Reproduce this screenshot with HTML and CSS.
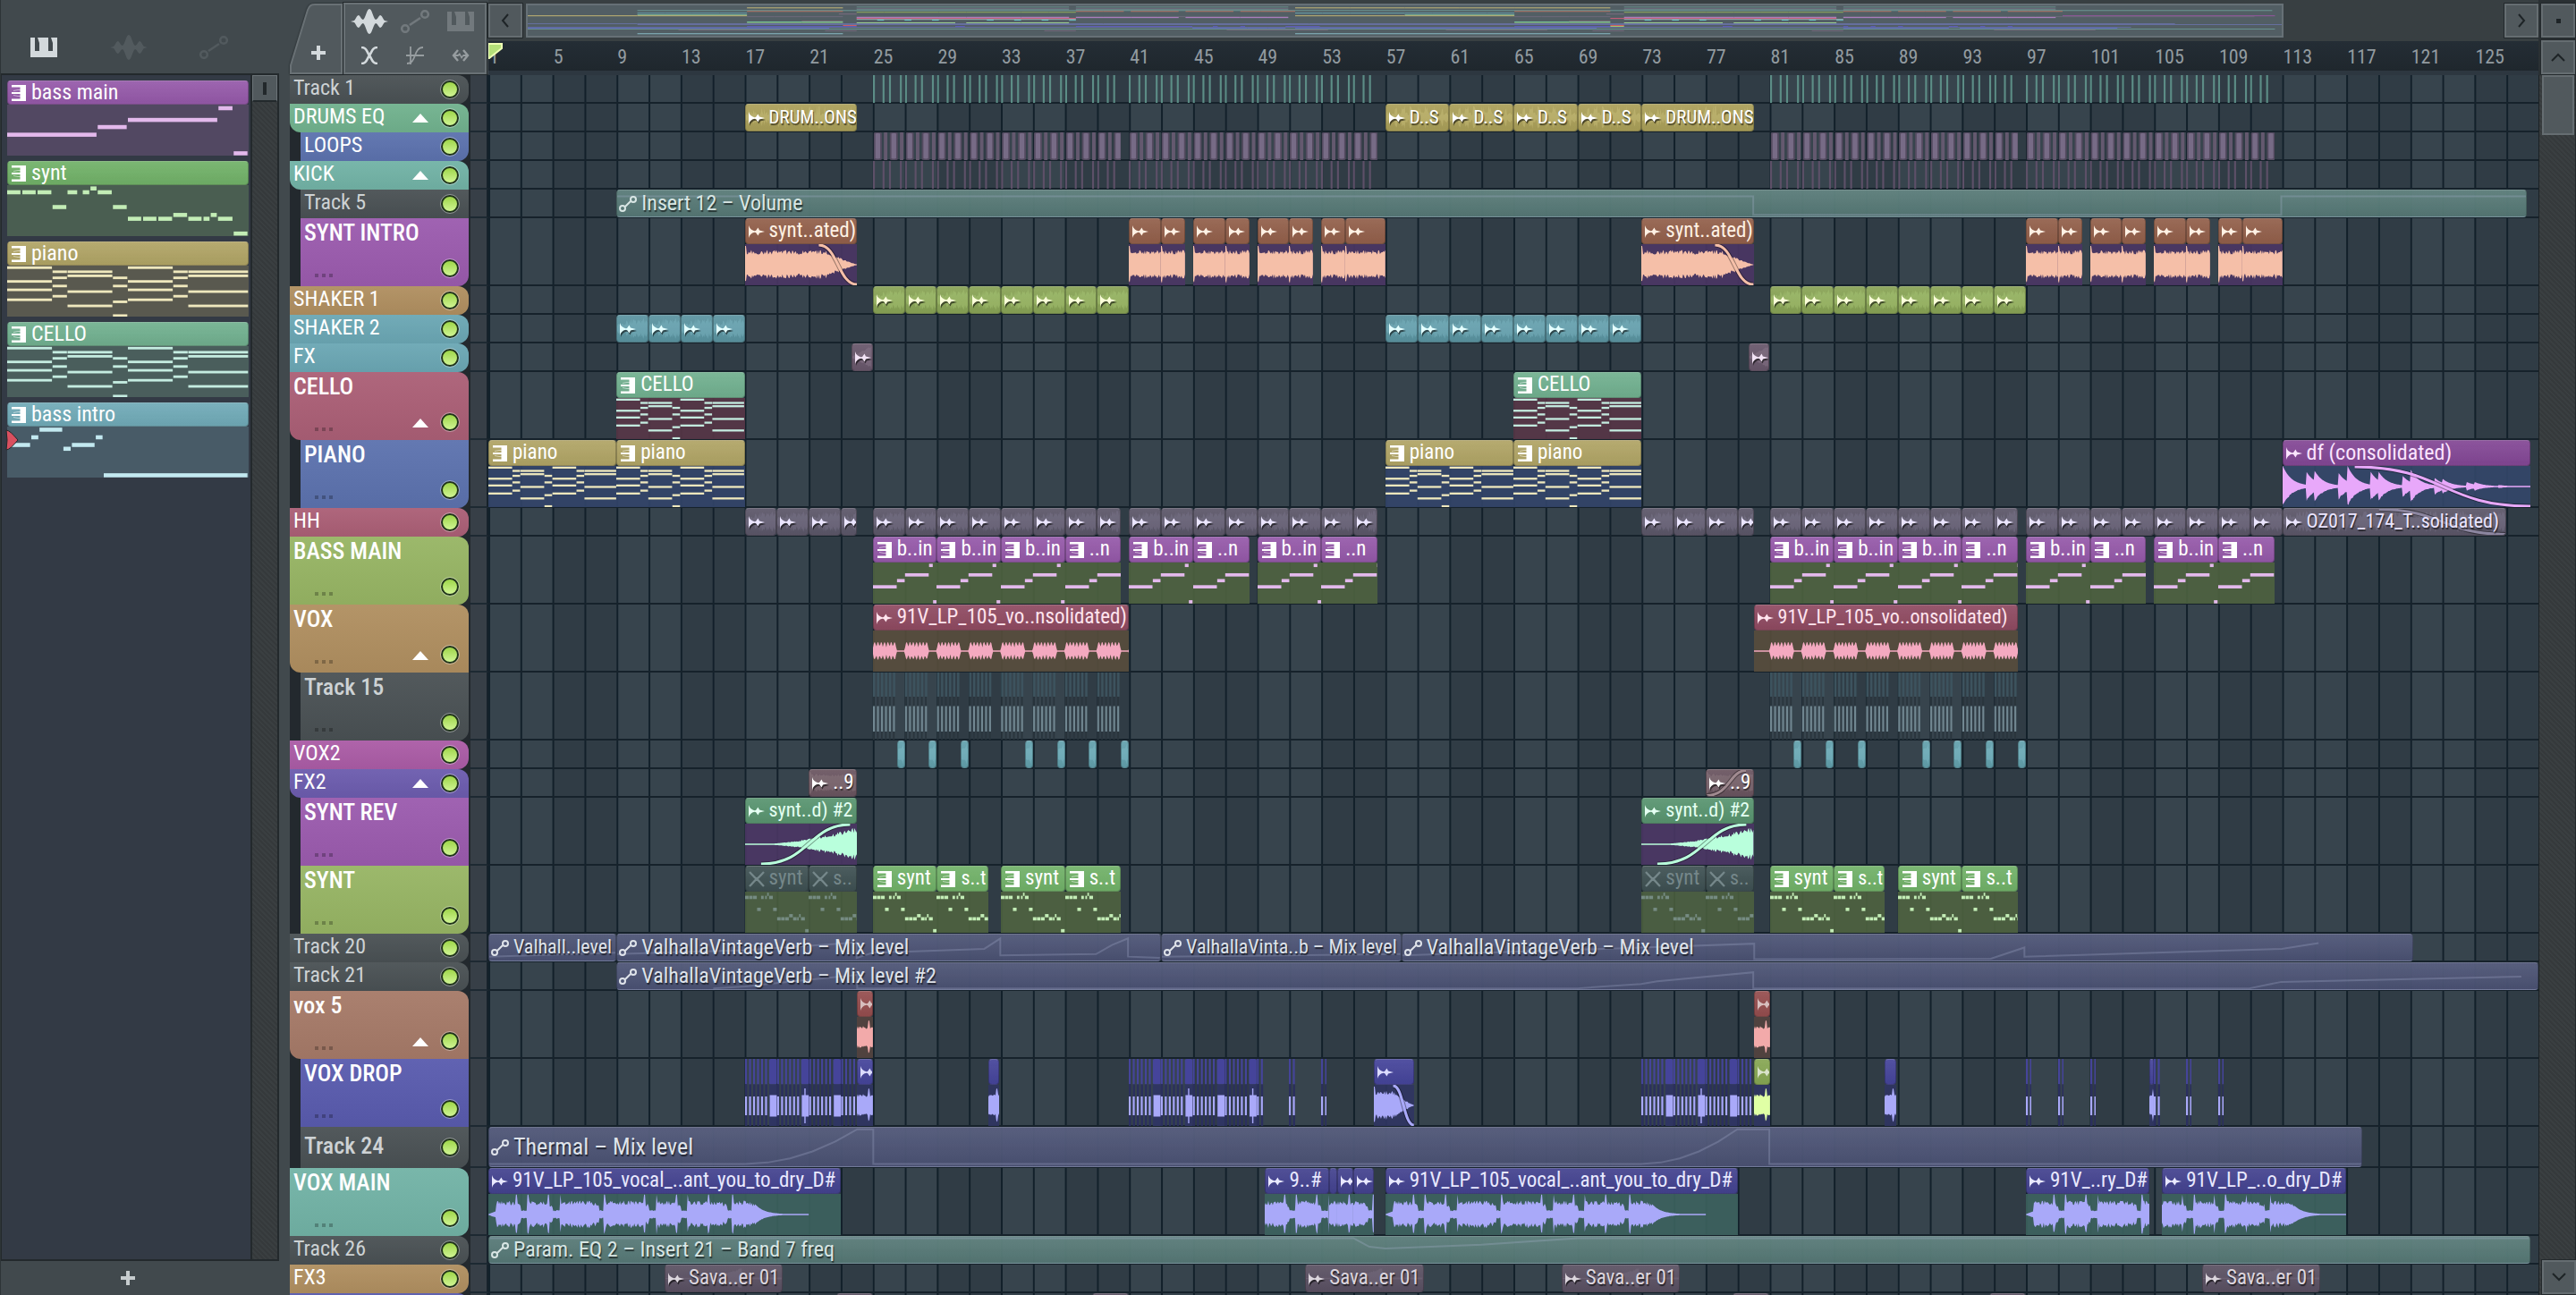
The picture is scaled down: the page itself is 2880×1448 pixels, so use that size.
FILE: index.html
```html
<!DOCTYPE html>
<html lang="en">
<head>
<meta charset="utf-8">
<title>Playlist</title>
<link rel="stylesheet" href="styles.css">
</head>
<body>
<svg class="sprite" aria-hidden="true">
  <symbol id="i-piano" viewBox="0 0 30 22"><path d="M0 0H5V15H10V6L8 0H20V15H25V6L23 0H30V22H0Z"/></symbol>
  <symbol id="i-wave" viewBox="0 0 42 28"><path d="M0 14L4 13C6 11 7 7 9 7C11 8 12 12 14 12C17 10 18 0 21 0C24 0 25 10 28 12C30 12 31 8 33 7C35 7 36 11 38 13L42 14L38 15C36 17 35 21 33 21C31 20 30 16 28 16C25 18 24 28 21 28C18 28 17 18 14 16C12 16 11 20 9 21C7 21 6 17 4 15Z"/></symbol>
  <symbol id="i-link" viewBox="0 0 32 26"><g fill="none" stroke="currentColor" stroke-width="2.6"><circle cx="5" cy="21" r="3.8"/><circle cx="27" cy="5" r="3.8"/><path d="M10 17L22 9"/></g></symbol>
  <symbol id="i-cross" viewBox="0 0 20 20"><path d="M1 1C7 1 7 6 10 10S13 19 19 19M19 1C13 1 13 6 10 10S7 19 1 19" fill="none" stroke="currentColor" stroke-width="2.6"/></symbol>
  <symbol id="i-curve" viewBox="0 0 20 20"><path d="M5 0V20M0 10H20M1 19C12 19 8 1 19 1" fill="none" stroke="currentColor" stroke-width="1.8"/></symbol>
  <symbol id="i-slip" viewBox="0 0 20 14"><path d="M7 1L2 7L7 13M13 1L18 7L13 13" fill="none" stroke="currentColor" stroke-width="2.4"/><path d="M2 6H7L9 4L11 8L13 6H18V8H13L11 11L9 7L7 8H2Z"/></symbol>
  <symbol id="i-plus" viewBox="0 0 16 16"><path d="M6 0H10V6H16V10H10V16H6V10H0V6H6Z"/></symbol>
  <symbol id="i-left" viewBox="0 0 10 16"><path d="M8 1L2 8L8 15" fill="none" stroke="currentColor" stroke-width="2"/></symbol>
  <symbol id="i-right" viewBox="0 0 10 16"><path d="M2 1L8 8L2 15" fill="none" stroke="currentColor" stroke-width="2"/></symbol>
  <symbol id="i-up" viewBox="0 0 16 10"><path d="M1 9L8 2L15 9" fill="none" stroke="currentColor" stroke-width="2"/></symbol>
  <symbol id="i-down" viewBox="0 0 16 10"><path d="M1 1L8 8L15 1" fill="none" stroke="currentColor" stroke-width="2"/></symbol>
  <symbol id="c-audio" viewBox="0 0 18 14"><path d="M0 0C1 3 3 5.500 6.500 6.200L8 6L10.500 2.500L12 5.500L18 7L12 8.500L10.500 11.500L8 8L6.500 7.800C3 8.500 1 11 0 14Z"/></symbol>
  <symbol id="c-pattern" viewBox="0 0 16 18"><path d="M0 0H16V18H0V15.500H9.500V12.800L2 12V11.400L9.500 12.200V10H0V8H9.500V5.800L2 6.600V6L9.500 5.200V2.500H0Z"/></symbol>
  <symbol id="c-auto" viewBox="0 0 20 18"><g fill="none" stroke="currentColor" stroke-width="2"><circle cx="4" cy="14" r="3"/><circle cx="16" cy="4" r="3"/><path d="M7 12L13 6"/></g></symbol>
  <symbol id="c-muted" viewBox="0 0 18 18"><path d="M1 1C5 5 6 7 9 9S13 13 17 17M17 1C13 5 12 7 9 9S5 13 1 17" fill="none" stroke="currentColor" stroke-width="2.4"/></symbol>
</svg>

<div class="app">
  <aside class="picker">
    <nav class="picker-tabs" aria-label="Picker filters">
      <button class="icon-btn is-on" aria-label="Patterns"><svg class="ic-piano"><use href="#i-piano"/></svg></button>
      <button class="icon-btn is-dim" aria-label="Audio clips"><svg class="ic-wave"><use href="#i-wave"/></svg></button>
      <button class="icon-btn is-dim" aria-label="Automation clips"><svg class="ic-link"><use href="#i-link"/></svg></button>
    </nav>
    <div class="picker-body">
      <div class="picker-list" id="picker"></div>
      <div class="picker-scroll"><button class="picker-thumb" aria-label="Scroll patterns"></button></div>
    </div>
    <button class="picker-add" aria-label="Add pattern"><svg class="ic-plus"><use href="#i-plus"/></svg></button>
  </aside>

  <main class="playlist">
    <header class="top">
      <div class="tools">
        <button class="tab-add" aria-label="Add track">
          <svg class="tab-shape" viewBox="0 0 60 80" preserveAspectRatio="none" aria-hidden="true"><path d="M1 79V70L20 8C22 3 24 2 28 2H58V79Z"/></svg>
          <svg class="ic-plus"><use href="#i-plus"/></svg>
        </button>
        <div class="tool-grid">
          <button class="icon-btn is-on" aria-label="Audio clips"><svg class="ic-wave"><use href="#i-wave"/></svg></button>
          <button class="icon-btn is-mid" aria-label="Automation clips"><svg class="ic-link"><use href="#i-link"/></svg></button>
          <button class="icon-btn is-mid" aria-label="Pattern clips"><svg class="ic-piano"><use href="#i-piano"/></svg></button>
          <button class="icon-btn is-on" aria-label="Auto crossfade"><svg class="ic-small"><use href="#i-cross"/></svg></button>
          <button class="icon-btn is-half" aria-label="Fade curve"><svg class="ic-small"><use href="#i-curve"/></svg></button>
          <button class="icon-btn is-half" aria-label="Slip edit"><svg class="ic-slip"><use href="#i-slip"/></svg></button>
        </div>
      </div>
      <div class="time">
        <div class="overview">
          <button class="nav-btn" aria-label="Scroll left"><svg class="ic-h"><use href="#i-left"/></svg></button>
          <div class="overview-track"><svg class="minimap" id="minimap" viewBox="0 0 128 38" preserveAspectRatio="none" aria-hidden="true"></svg></div>
          <button class="nav-btn" aria-label="Scroll right"><svg class="ic-h"><use href="#i-right"/></svg></button>
        </div>
        <div class="ruler" id="ruler"></div>
      </div>
      <div class="corner">
        <button class="nav-btn" aria-label="Options"><span class="dot"></span></button>
        <button class="nav-btn" aria-label="Scroll up"><svg class="ic-v"><use href="#i-up"/></svg></button>
      </div>
    </header>
    <div class="stage">
      <div class="tracks" id="tracks"></div>
      <div class="vscroll">
        <button class="vscroll-thumb" aria-label="Scroll tracks"></button>
        <button class="nav-btn" aria-label="Scroll down"><svg class="ic-v"><use href="#i-down"/></svg></button>
      </div>
    </div>
  </main>
</div>
<script src="script.js"></script>
</body>
</html>
```
FILE: styles.css
```css
* { box-sizing: border-box; }

body {
  margin: 0;
  background: #41494d;
  color: #fff;
  font-family: "Roboto Condensed", Roboto, "Noto Sans", sans-serif;
  font-size: 24px;
  line-height: 28px;
}

button {
  appearance: none;
  margin: 0;
  padding: 0;
  border: 0;
  background: none;
  color: inherit;
  font: inherit;
  text-align: left;
}

svg { display: block; fill: currentColor; }
.sprite { display: none; }

.app {
  display: grid;
  grid-template-columns: 324px 1fr;
  height: 100vh;
  overflow: hidden;
}

/* icons */
.ic-piano { width: 30px; height: 22px; }
.ic-wave { width: 42px; height: 28px; }
.ic-link { width: 32px; height: 26px; }
.ic-small { width: 20px; height: 20px; }
.ic-slip { width: 20px; height: 14px; }
.ic-plus { width: 16px; height: 16px; }
.ic-h { width: 10px; height: 16px; }
.ic-v { width: 16px; height: 10px; }
.icon-btn { display: grid; place-items: center; }
.is-on { color: #d3d9dc; }
.is-dim { color: #525a5e; }
.is-mid { color: #72797d; }
.is-half { color: #979da0; }

/* picker panel */
.picker {
  display: flex;
  flex-direction: column;
  min-height: 0;
  border-left: 1px solid #2d3437;
}
.picker-tabs {
  display: grid;
  grid-template-columns: repeat(3, 95px);
  height: 82px;
  padding-top: 24px;
}
.picker-body {
  display: flex;
  flex: 1;
  min-height: 0;
  margin-right: 12px;
  border: 2px solid #23292c;
  border-left-width: 1px;
}
.picker-list {
  display: flex;
  flex: 1;
  flex-direction: column;
  gap: 6px;
  padding: 6px 2px 6px 6px;
  background: #333a45;
}
.picker-scroll {
  width: 30px;
  border-left: 2px solid #23292c;
  background: repeating-linear-gradient(45deg, #35393b 0 2px, #3a3f41 2px 4px);
}
.picker-thumb {
  display: grid;
  place-items: center;
  width: 28px;
  height: 30px;
  border: 1px solid #6b7377;
  border-bottom: 2px solid #23292c;
  background: #51595d;
}
.picker-thumb::before { content: ""; width: 4px; height: 14px; background: #22282b; }
.picker-add {
  display: grid;
  place-items: center;
  width: 284px;
  height: 38px;
  color: #c6ccce;
}
.pattern.clip {
  position: relative;
  width: 100%;
  height: 84px;
  overflow: visible;
  font-size: 24px;
}
.pattern .clip-head { width: 100%; height: 27px; }
.pattern .clip-body { width: 100%; }
.playhead {
  position: absolute;
  left: -2px;
  top: 30px;
  width: 15px;
  height: 24px;
  fill: #d9505f;
  stroke: #23292c;
}

/* top bar */
.playlist { display: flex; flex-direction: column; min-width: 0; min-height: 0; }
.top {
  display: grid;
  grid-template-columns: 222px 1fr 42px;
  height: 84px;
}
.tools {
  display: grid;
  grid-template-columns: 60px 160px;
  padding-top: 3px;
  border-bottom: 2px solid #23292c;
}
.tab-add { position: relative; display: grid; place-items: center; padding: 32px 0 0 4px; color: #d3d9dc; }
.tab-shape {
  position: absolute;
  inset: 0;
  width: 100%;
  height: 100%;
  fill: #51595d;
  stroke: #697175;
  stroke-width: 2;
  filter: drop-shadow(0 0 1px #1c2225);
}
.tab-add .ic-plus { position: relative; }
.tool-grid {
  display: grid;
  grid-template: 38px 38px / 1fr 1fr 1fr;
  padding: 0 2px;
  border: 2px solid #697175;
  outline: 1px solid #23292c;
  background: #51595d;
}
.time { display: flex; flex-direction: column; min-width: 0; }
.overview { display: flex; height: 46px; padding-top: 4px; background: #383f42; }
.nav-btn {
  display: grid;
  flex: none;
  place-items: center;
  width: 38px;
  height: 38px;
  border: 2px solid #656d71;
  outline: 1px solid #23292c;
  background: #51595d;
  color: #1e2427;
}
.overview-track { flex: 1; margin: 0 4px; }
.minimap {
  width: 89%;
  height: 38px;
  border: 2px solid #667076;
  background: #525e64;
}
.ruler {
  position: relative;
  display: grid;
  grid-template-columns: repeat(32, 1fr);
  height: 38px;
  padding-top: 4px;
  border-bottom: 5px solid #2d3740;
  background: linear-gradient(#242d35, #1f272d);
  color: #929ba0;
  font-size: 22px;
  line-height: 28px;
}
.ruler span { padding-left: 1px; white-space: nowrap; }
.marker { position: absolute; left: 0; top: 2px; width: 16px; height: 18px; fill: #b5e079; stroke: #efffb5; stroke-width: 2; }
.corner { display: grid; gap: 3px; align-content: start; padding: 4px 0 0 3px; background: #2a3033; }
.dot { width: 5px; height: 5px; background: #1e2427; }

/* tracks */
.stage { display: flex; flex: 1; min-height: 0; overflow: hidden; }
.tracks { flex: 1; min-width: 0; background: #23292e; }
.vscroll {
  display: flex;
  flex-direction: column;
  justify-content: space-between;
  width: 42px;
  padding: 0 1px 1px 3px;
  border-left: 1px solid #1c2225;
  border-right: 1px solid #23292c;
  background: repeating-linear-gradient(45deg, #35393b 0 2px, #3a3f41 2px 4px);
}
.vscroll-thumb { height: 67px; border: 2px solid #656d71; background: #51595d; }
.track { display: flex; height: 32px; }
.track--tall { height: 76px; }
.track--mid { height: 46px; }
.strip {
  width: 22px;
  border-left: 2px solid #23292e;
  border-right: 2px solid #16222b;
  border-bottom: 2px solid #1d2932;
  background: #373f47;
}
.head {
  display: grid;
  grid-template-columns: 1fr auto auto;
  align-items: center;
  column-gap: 14px;
  width: 200px;
  padding: 0 11px 0 4px;
  background: linear-gradient(#ffffff0c, #0000000c) var(--c);
}
.head--child { width: 188px; margin-left: 12px; }
.head--tr { border-top-right-radius: 12px; }
.head--br { border-bottom-right-radius: 12px; }
.head--parent { border-bottom-left-radius: 12px; }
.name { grid-column: 1; white-space: nowrap; padding-bottom: 4px; }
.track--tall .head { grid-template-rows: 32px 1fr; align-items: end; padding-bottom: 10px; }
.track--tall .name, .track--mid .name { font-size: 26px; font-weight: 500; }
.track--tall .name { grid-column: 1 / -1; align-self: center; padding-bottom: 0; }
.more { display: flex; gap: 4px; grid-column: 1; margin-left: 24px; }
.head--child .more { margin-left: 12px; }
.more i { width: 4px; height: 4px; background: #00000040; }
.fold {
  grid-column: 2;
  width: 0;
  height: 0;
  border: 9px solid transparent;
  border-top-width: 0;
  border-bottom: 10px solid #fff;
}
.track--tall .fold { margin-bottom: 4px; }
.led {
  appearance: none;
  grid-column: 3;
  width: 20px;
  height: 20px;
  margin: 0;
  border: 2px solid #20341a;
  border-radius: 50%;
  outline: 1px solid #ffffff60;
  background: linear-gradient(#9ed549, #d0f594);
}
.c-gray { --c: #4a5154; color: #cdd2d4; }
.c-green { --c: #71b28e; }
.c-blue { --c: #5c72ae; }
.c-teal { --c: #72b3a6; }
.c-purple { --c: #9b5bae; }
.c-sand { --c: #b08f60; }
.c-aqua { --c: #6ba7b4; }
.c-rose { --c: #ab5f76; }
.c-lime { --c: #97b564; }
.c-pink { --c: #ab5ca6; }
.c-violet { --c: #6c5cae; }
.c-clay { --c: #a67a68; }
.c-indigo { --c: #595bae; }

.lane {
  position: relative;
  flex: 1;
  min-width: 0;
  border-bottom: 2px solid #16222b;
  background:
    linear-gradient(90deg, #12202a 2px, transparent 2px) 0 0 / 1.5625% 100%,
    linear-gradient(90deg, #37444d 50%, #303c45 50%) 0 0 / 6.25% 100%;
}

/* clips */
.clip {
  position: absolute;
  top: 0;
  bottom: -1px;
  display: flex;
  flex-direction: column;
  overflow: hidden;
  color: var(--text, #fff);
  font-size: 23px;
}
.clip-head {
  position: relative;
  display: flex;
  flex: none;
  align-items: center;
  gap: 5px;
  height: 29px;
  padding-left: 3px;
  overflow: hidden;
  border: 1px solid #00000038;
  border-top-color: #ffffff38;
  border-radius: 4px;
  background: linear-gradient(#ffffff12, #0000000c) var(--head);
  line-height: 24px;
  white-space: nowrap;
}
.clip-head svg { position: relative; flex: none; width: 18px; height: 18px; }
.clip-head span { position: relative; padding-bottom: 1px; }
.clip-head .clip-art { position: absolute; inset: 0; width: 100%; height: 100%; }
.clip-head .shape { opacity: .3; }
.clip--dark .clip-head, .clip--auto .clip-head { text-shadow: 1px 2px 1px #00000090; }
.clip--dark .clip-head svg:not(.clip-art) { filter: drop-shadow(1px 2px 0 #00000090); }
.clip-body { flex: 1; min-height: 0; background: var(--body); }
.clip-art { width: 100%; height: 100%; fill: var(--wave); }
.clip--flat .clip-head { height: 100%; }
.clip--auto { font-size: 24px; }
.clip--auto .clip-head { height: 100%; padding-left: 2px; border-bottom-color: #b4bcdc50; }
.clip--auto .clip-head svg.clip-art { fill: none; stroke: #b4bcdc; stroke-width: 2; opacity: .25; }
.clip--auto .clip-head svg { width: 20px; }
.clip--auto .clip-head .clip-art { width: 100%; }
.clip--big { font-size: 26px; }
.clip--tight { font-size: 22px; }
.clip--faint { --text: #ffffffa0; }
.clip--stripes { overflow: visible; }
.fade { fill: none; stroke: var(--wave); stroke-width: 3; }
.fade-shadow { fill: none; stroke: #00000060; stroke-width: 5; }

.k-drum { --head: #aa9f58; --wave: #d9cf8c; font-size: 21px; }
.k-synth { --head: #925f4a; --body: #4b3664e8; --wave: #f5bfa8; --text: #fff1e4; }
.k-shaker { --head: #88a355; --wave: #b9d983; --text: #fbffda; }
.k-shaker2 { --head: #5a93a0; --wave: #8fcbd6; --text: #e4ffff; }
.k-fx { --head: #67566a; --wave: #9d879b; --text: #f2e3f5; }
.k-cello { --head: #71b08f; --body: #573646e8; --wave: #c4ece0; }
.k-piano { --head: #b0a465; --body: #33446ae8; --wave: #efe8bd; }
.k-df { --head: #834795; --body: #34466ae8; --wave: #e8a8fa; --text: #fbe4ff; font-size: 24px; }
.k-hh { --head: #5b5668; --wave: #8c86a0; --text: #ebe5ff; }
.k-bass { --head: #9559a9; --body: #4e6240e8; --wave: #e3b9ec; }
.k-vox { --head: #8f4a61; --body: #584d3ce8; --wave: #f4a9c0; --text: #ffe4ee; }
.k-vox2 { --head: #62a0ac; --wave: #8fcbd6; }
.k-fx2 { --head: #69545f; --wave: #a08a90; --text: #fff; }
.k-rev { --head: #58946f; --body: #4b3664e8; --wave: #b9ffdc; --text: #e4fff2; }
.k-synt { --head: #71b168; --body: #4e6240e8; --wave: #c3edb6; }
.k-muted { --head: #3e5052; --body: #4e6240d8; --wave: #758b82; --text: #75878a; }
.k-verb { --head: #4c5476f4; --wave: #6d76a8; --text: #dfe3ea; }
.k-vol { --head: #587b78f4; --wave: #6fa09a; --text: #d8e6e4; }
.k-red { --head: #954d4e; --body: #54433fe8; --wave: #f2aaaa; --text: #ffffffa0; }
.k-drop { --head: #45449a; --body: #2f3562e8; --wave: #a9a9f9; --text: #dcdcff; }
.k-lime { --head: #86a653; --body: #2f3562e8; --wave: #e0ffa5; --text: #ffffffb0; }
.k-main { --head: #43428f; --body: #3d625ee8; --wave: #a9a9f9; --text: #e9e9ff; }
.k-sava { --head: #5a5062; --wave: #857a90; --text: #dcd6de; }
.k-intro { --head: #70aab7; --body: #485b67; --wave: #c3e9f0; }

/* picker tiles sit on their own muted tint */
.pattern.k-bass { --body: #524862; }
.pattern.k-synt { --body: #4a5e51; }
.pattern.k-piano { --body: #59594f; }
.pattern.k-cello { --body: #4a5e5c; }
```
FILE: script.js
```js
const BARS = 128;
const PX = 18; // drawing resolution, units per bar

const tracks = [
  ["Track 1", "gray", "", "tr br"],
  ["DRUMS EQ", "green", "", "tr parent"],
  ["LOOPS", "blue", "", "child br"],
  ["KICK", "teal", "", "tr parent"],
  ["Track 5", "gray", "", "child"],
  ["SYNT INTRO", "purple", "tall", "child br"],
  ["SHAKER 1", "sand", "", "tr br"],
  ["SHAKER 2", "aqua", "", "tr br"],
  ["FX", "aqua", "", "tr br"],
  ["CELLO", "rose", "tall", "tr parent"],
  ["PIANO", "blue", "tall", "child br"],
  ["HH", "rose", "", "tr br"],
  ["BASS MAIN", "lime", "tall", "tr br"],
  ["VOX", "sand", "tall", "tr parent"],
  ["Track 15", "gray", "tall", "child br"],
  ["VOX2", "pink", "", "tr br"],
  ["FX2", "violet", "", "tr parent"],
  ["SYNT REV", "purple", "tall", "child"],
  ["SYNT", "lime", "tall", "child br"],
  ["Track 20", "gray", "", "tr br"],
  ["Track 21", "gray", "", "tr br"],
  ["vox 5", "clay", "tall", "tr parent"],
  ["VOX DROP", "indigo", "tall", "child"],
  ["Track 24", "gray", "mid", "child br"],
  ["VOX MAIN", "teal", "tall", "tr br"],
  ["Track 26", "gray", "", "tr br"],
  ["FX3", "sand", "", "tr br"],
  ["", "indigo", "", "tr"]
];

/* ---- note patterns: [start, end, row] as fractions of the pattern ---- */
const chord = (a, b, rows) => rows.map(r => [a, b, r]);
const keys = [
  ...chord(0, .188, [.04, .31, .475, .67]), ...chord(.188, .25, [.12, .24, .4, .6]),
  ...chord(.25, .438, [.12, .2, .51, .79]), ...chord(.438, .5, [.24, .4, .71, .98]),
  ...chord(.5, .688, [.04, .31, .475, .67]), ...chord(.688, .75, [.12, .24, .4, .6]),
  ...chord(.75, 1, [.12, .2, .51, .79])
];
const patterns = {
  piano: { bars: 8, size: 5, notes: keys },
  cello: { bars: 8, size: 5, notes: keys },
  bass: { bars: 4, size: 8, notes: [[0, .375, .59], [.375, .5, .44], [.5, .875, .3], [.875, .938, .07], [.938, 1, .955]] },
  synt: { bars: 4, size: 8, notes: [
    [0, .06, .14], [.063, .123, .14], [.126, .188, .14], [.188, .25, .43], [.25, .295, .14], [.313, .345, .14],
    [.345, .375, .065], [.375, .438, .14], [.438, .5, .43], [.5, .56, .66], [.563, .623, .66], [.626, .688, .66],
    [.688, .75, .585], [.75, .81, .66], [.813, .843, .66], [.843, .873, .585], [.873, .938, .66], [.938, 1, .95]] },
  intro: { bars: 4, size: 8, notes: [[0, .1, .36], [.1, .134, .21], [.134, .233, .06], [.233, .268, .435], [.268, .367, .36], [.367, .4, .21], [.4, 1, .955]] }
};

function notesSvg(name, len) {
  const p = patterns[name];
  let out = "";
  for (const [a, b, y] of p.notes) {
    out += `<rect x="${a * p.bars * 100}" y="${y * 100 - p.size / 2}" width="${(b - a) * p.bars * 100 - 2}" height="${p.size}"/>`;
  }
  return art(len * 100, out);
}

function art(width, inner) {
  return `<svg class="clip-art" viewBox="0 0 ${width} 100" preserveAspectRatio="none" aria-hidden="true">${inner}</svg>`;
}

/* ---- waveforms ---- */
let seed = 7;
const rnd = () => (seed = (seed * 16807) % 2147483647) / 2147483647;

const vocalBlocks = [[.45, 2], [2.45, 4], [4.5, 6.9], [7.25, 10], [10.5, 12], [12.45, 14.9], [15.25, 16.7]];
const vocalPeaks = [1.75, 2.47, 3.75, 4.5, 7.25, 9.75, 10.5, 11.75, 12.45, 13.75, 15.25];
const hits = [[0, 1], [1.45, .75], [2, .75], [3.45, .7], [4.05, 1], [5.5, .7], [6, .7], [7.5, .5], [8, .8], [9.5, .4], [10, .35], [11.5, .2], [12, .2], [13.5, .06]];

const envelopes = {
  sustain: (t, len, o) => {
    let v = t < .08 ? .9 : .48 + rnd() * .22;
    if (o.fade !== undefined && t > o.fade) v *= Math.pow(Math.max(0, 1 - (t - o.fade) / (len - o.fade)), 1.2);
    return v;
  },
  grow: (t, len) => .02 + Math.pow(Math.max(0, t / len - .25) / .75, 1.4) * (.65 + rnd() * .35) * .8,
  vocal: (t, len, o) => {
    const x = t + (o.off || 0);
    if (vocalPeaks.some(p => Math.abs(x - p) < .05)) return .95;
    if (x > 16.7) return Math.max(.02, .45 * Math.exp(-(x - 16.7) * 1.8));
    for (const [a, b] of vocalBlocks) if (x >= a && x <= b) return (.44 + rnd() * .22) * (b - x < .5 ? .75 + (b - x) * .5 : 1);
    return x < .45 ? x * .3 : .15 + rnd() * .05;
  },
  hits: t => {
    let v = .015;
    for (const [at, amp] of hits) if (t >= at) v = Math.max(v, amp * Math.exp(-(t - at) * 1.8));
    return v;
  },
  pulses: (t, len, o) => {
    const x = t - (o.lead || 0);
    if (x < 0) return .015;
    const m = x % 2;
    return m < 1.45 ? .15 + .28 * Math.abs(Math.sin(m / 1.45 * Math.PI * 7)) : .02;
  },
  burst: (t, len) => (t > len * .7 && t < len * .8 ? .8 : .4 + rnd() * .15),
  drums: t => .15 + rnd() * (t % .5 < .2 ? .8 : .3),
  beat: t => (t % 2 > .8 ? .3 + rnd() * .55 : .15 + rnd() * .5),
  ramp: (t, len) => .05 + .85 * (t / len) * (.8 + rnd() * .2),
  swell: (t, len) => (t < len * .66 ? .02 + .9 * Math.pow(t / len / .66, 3) * (.7 + rnd() * .3) : .06)
};

function waveSvg(kind, len, o) {
  seed = 7 + Math.round(len * 10);
  const stop = Math.min(len, o.stop || len);
  const n = Math.max(4, Math.round(stop * PX));
  const top = [], bottom = [];
  for (let i = 0; i <= n; i++) {
    const v = envelopes[kind](i / PX, len, o) * 50;
    const w = v * (.85 + rnd() * .15);
    top.push(`${i} ${(50 - v - .8).toFixed(1)}`);
    bottom.unshift(`${i} ${(50 + w + .8).toFixed(1)}`);
  }
  let inner = `<path class="shape" d="M${top.join("L")}L${bottom.join("L")}Z"/>`;
  if (o.curve) {
    const w = len * PX, x = o.curve[1] * PX, mid = (x + w) / 2;
    const d = o.curve[0] === "out"
      ? `M${x} 2C${mid} 2 ${mid} 98 ${w} 98`
      : `M${x} 98C${mid} 98 ${mid} 2 ${w - 8} 2`;
    inner += `<path class="fade-shadow" vector-effect="non-scaling-stroke" d="${d}"/><path class="fade" vector-effect="non-scaling-stroke" d="${d}"/>`;
  }
  return art(len * PX, inner);
}

function lineSvg(points, len) {
  const d = points.map(([x, y]) => `${x * 10} ${y * 100}`).join("L");
  return art(len * 10, `<path vector-effect="non-scaling-stroke" d="M${d}"/>`);
}

/* ---- clips ---- */
const lanes = tracks.map(() => []);
const put = (row, kind, start, end, o = {}) => lanes[row].push({ kind, start, end, ...o });
const run = (row, kind, from, to, step, o) => {
  for (let s = from; s < to; s += step) put(row, kind, s, Math.min(s + step, to), o);
};

for (const [from, n] of [[24, 15.5], [40, 15.5], [80, 15.5], [96, 15.5]]) {
  put(0, "fine", from, from + n, { color: "#5c8d86" });
  put(2, "loops", from, from + n);
  put(3, "fine", from, from + n, { color: "#5d5068" });
}

const drums = { icon: "audio", flat: "drums", dark: true };
put(1, "drum", 16, 23, { ...drums, label: "DRUM..ONS" });
run(1, "drum", 56, 72, 4, { ...drums, label: "D..S" });
put(1, "drum", 72, 79, { ...drums, label: "DRUM..ONS" });

put(4, "vol", 8, 127.3, { auto: [[0, .22], [71, .22], [71, .94], [104, .94], [104, .22], [119.3, .22]], label: "Insert 12 – Volume" });

for (const s of [16, 72]) put(5, "synth", s, s + 7, { icon: "audio", wave: "sustain", fade: 5, curve: ["out", 4.6], label: "synt..ated)" });
for (const base of [40, 96]) {
  for (const [a, b] of [[0, 2], [2, 3.5], [4, 6], [6, 7.5], [8, 10], [10, 11.5], [12, 13.5], [13.5, 16]]) {
    put(5, "synth", base + a, base + b, { icon: "audio", wave: "sustain" });
  }
}
run(6, "shaker", 24, 40, 2, { icon: "audio", flat: "beat", dark: true });
run(6, "shaker", 80, 96, 2, { icon: "audio", flat: "beat", dark: true });
run(7, "shaker2", 8, 16, 2, { icon: "audio", flat: "beat", dark: true });
run(7, "shaker2", 56, 72, 2, { icon: "audio", flat: "beat", dark: true });
put(8, "fx", 22.7, 24, { icon: "audio", flat: "ramp", dark: true });
put(8, "fx", 78.7, 80, { icon: "audio", flat: "ramp", dark: true });
put(9, "cello", 8, 16, { icon: "pattern", notes: "cello", label: "CELLO" });
put(9, "cello", 64, 72, { icon: "pattern", notes: "cello", label: "CELLO" });
for (const s of [0, 8, 56, 64]) put(10, "piano", s, s + 8, { icon: "pattern", notes: "piano", label: "piano" });
put(10, "df", 112, 127.5, { icon: "audio", wave: "hits", curve: ["out", 4.5], label: "df (consolidated)" });

const hh = { icon: "audio", flat: "beat", dark: true };
for (const [a, b] of [[16, 23], [24, 39.5], [40, 55.5], [72, 79], [80, 95.5], [96, 112]]) run(11, "hh", a, b, 2, hh);
put(11, "hh", 112, 126, { icon: "audio", flat: "beat", dark: true, tight: true, curve: ["out", 6], label: "OZ017_174_T..solidated)" });

const bass = (s, e) => put(12, "bass", s, e, { icon: "pattern", notes: "bass", label: e - s < 4 ? "..n" : "b..in" });
for (const base of [24, 80]) { bass(base, base + 4); bass(base + 4, base + 8); bass(base + 8, base + 12); bass(base + 12, base + 15.5); }
for (const base of [40, 48, 96, 104]) { bass(base, base + 4); bass(base + 4, base + 7.5); }

put(13, "vox", 24, 40, { icon: "audio", wave: "pulses", label: "91V_LP_105_vo..nsolidated)" });
put(13, "vox", 79, 95.5, { icon: "audio", wave: "pulses", lead: 1, label: "91V_LP_105_vo..onsolidated)", tight: true });
put(14, "ticks", 24, 40);
put(14, "ticks", 80, 96);
for (const base of [24, 80]) for (const d of [1.5, 3.5, 5.5, 9.5, 11.5, 13.5, 15.5]) put(15, "vox2", base + d, base + d + .5, { flat: "burst" });
put(16, "fx2", 20, 23, { icon: "audio", flat: "sustain", dark: true, faint: true, label: "..9" });
put(16, "fx2", 76, 79, { icon: "audio", flat: "sustain", dark: true, faint: true, curve: ["in", 0], label: "..9" });
for (const s of [16, 72]) {
  put(17, "rev", s, s + 7, { icon: "audio", wave: "grow", curve: ["in", 1], label: "synt..d) #2", tight: true });
  put(18, "muted", s, s + 4, { icon: "muted", notes: "synt", label: "synt" });
  put(18, "muted", s + 4, s + 7, { icon: "muted", notes: "synt", label: "s..", tight: true });
  for (const [a, b, label] of [[8, 12, "synt"], [12, 15.2, "s..t"], [16, 20, "synt"], [20, 23.5, "s..t"]]) {
    put(18, "synt", s + a, s + b, { icon: "pattern", notes: "synt", label, tight: b - a < 3.5 });
  }
}

put(19, "verb", 0, 8, { auto: [[0, .85], [8, .7]], label: "Valhall..level", tight: true });
put(19, "verb", 8, 42, { auto: [[0, .75], [8, .6], [15, .3], [15, .9], [16, .7], [23, .55], [24, .15], [24, .8], [30, .75], [31, .4], [32, .15], [32, .85], [34, .9]], label: "ValhallaVintageVerb – Mix level" });
put(19, "verb", 42, 57, { auto: [[0, .85], [15, .75]], label: "ValhallaVinta..b – Mix level", tight: true });
put(19, "verb", 57, 120.2, { auto: [[0, .8], [15, .5], [22, .35], [22, .95], [36.8, .93], [38.9, .5], [38.9, .85], [55, .55], [57.3, .33]], label: "ValhallaVintageVerb – Mix level" });
put(20, "verb", 8, 128, { auto: [[6, .97], [8, .9], [11, .7], [15, .45], [15, .97], [60, .97], [64, .8], [65, .7], [71, .35], [71, .97], [102, .97], [104, .72], [119, .52]], label: "ValhallaVintageVerb – Mix level #2" });
put(21, "red", 23, 24, { icon: "audio", wave: "burst" });
put(21, "red", 79, 80, { icon: "audio", wave: "burst" });

for (const [a, b] of [[16, 23], [40, 48.5], [72, 79]]) put(22, "chops", a, b);
for (const a of [31.2, 87.2]) put(22, "drop", a, a + .7, { wave: "burst" });
for (const a of [50, 52, 96, 98, 100, 104, 106, 108]) put(22, "chops", a, a + .35);
put(22, "drop", 103.7, 104, { wave: "burst" });
put(22, "drop", 23, 24, { icon: "audio", wave: "burst" });
put(22, "lime", 79, 80, { icon: "audio", wave: "burst" });
put(22, "drop", 55.3, 57.8, { icon: "audio", wave: "sustain", fade: 1.2, curve: ["out", 1.2] });

const rise = (a, b) => [0, .2, .4, .6, .8, 1].map(t => [a + (b - a) * t, .94 - .9 * t * t]);
put(23, "verb", 0, 117, { big: true, auto: [[0, .94], ...rise(16, 23), [24, .04], [24, .94], ...rise(72, 78), [80, .04], [80, .94], [117, .94]], label: "Thermal – Mix level" });

const vocal = (s, e, label, off = 0, o = {}) => put(24, "main", s, e, { icon: "audio", wave: "vocal", off, label, ...o });
vocal(0, 22, "91V_LP_105_vocal_..ant_you_to_dry_D#", 0, { stop: 20 });
vocal(48.5, 52.5, "9..#", .5);
vocal(52.5, 53, "", 12.5, { icon: "" });
vocal(53, 54, "", 13);
vocal(54, 55.3, "", 14);
vocal(56, 78, "91V_LP_105_vocal_..ant_you_to_dry_D#", 0, { stop: 20 });
vocal(96, 103.7, "91V_..ry_D#");
vocal(104.5, 116, "91V_LP_..o_dry_D#", 8.47);

put(25, "vol", 0, 127.5, { auto: [[0, .05], [54, .05], [55, .38], [56, .45], [62, .3], [68, .05], [127.5, .05]], label: "Param. EQ 2 – Insert 21 – Band 7 freq" });
for (const s of [11, 51, 67, 107]) put(26, "sava", s, s + 7.4, { icon: "audio", flat: "swell", dark: true, label: "Sava..er 01" });
for (const s of [21.7, 37.7, 77.7, 93.7]) put(27, "sava", s, s + 2.3, { flat: "ramp" });

/* ---- rows of very short slices, drawn as one block ---- */
function sliceSvg(c) {
  const len = c.end - c.start;
  let out = "";
  const rect = (x, y, w, h, fill, r = 0) => { if (x < len) out += `<rect x="${x * PX}" y="${y}" width="${w * PX}" height="${h}" rx="${r}" fill="${fill}"/>`; };
  if (c.kind === "fine") {
    for (let b = 0; b < len; b++) {
      rect(b, 0, .12, 100, c.color);
      if (b < len - 1) rect(b + (b % 2 ? .68 : .6), 0, .12, 100, c.color);
    }
  } else if (c.kind === "loops") {
    for (let b = 0; b < len; b++) {
      rect(b + .05, 0, .5, 100, "#544b60", 3);
      rect(b + .15, 3, .3, 92, "#776b86", 2);
      rect(b + .68, 0, .22, 100, "#64596f", 1);
    }
  } else if (c.kind === "ticks") {
    for (let b = 0; b < len; b += 2) for (let i = 0; i < 6; i++) {
      rect(b + i * .25, 0, .14, 36, "#3d535e");
      rect(b + i * .25, 36, .1, 64, "#2a353d");
      rect(b + i * .25, 50, .12, 38, "#718791");
    }
  } else {
    for (let b = 0; b < len; b += 2) {
      for (let i = 0; i < 6; i++) {
        rect(b + i * .25, 0, .12, 38, "#45449a");
        rect(b + i * .25, 38, .14, 62, "#2b2f5e");
        rect(b + i * .25, 56, .12, 28, "#a9a9f9");
      }
      rect(b + 1.5, 0, .48, 38, "#45449a", 2);
      rect(b + 1.5, 38, .5, 62, "#2f3562");
      rect(b + 1.54, 54, .44, 32, "#a9a9f9");
      if (b % 4) rect(b + 1.7, 44, .08, 52, "#a9a9f9");
    }
  }
  return art(len * PX, out);
}

function clipHtml(c) {
  const len = c.end - c.start;
  const place = `left:${c.start / BARS * 100}%;width:${len / BARS * 100}%`;
  if (["fine", "loops", "ticks", "chops"].includes(c.kind)) {
    return `<div class="clip clip--stripes" style="${place}">${sliceSvg(c)}</div>`;
  }
  const icon = c.auto ? "auto" : c.icon;
  const iconSvg = icon ? `<svg><use href="#c-${icon}"/></svg>` : "";
  const label = c.label ? `<span>${c.label}</span>` : "";
  const cls = ["clip", `k-${c.kind}`];
  if (c.dark) cls.push("clip--dark");
  if (c.big) cls.push("clip--big");
  if (c.tight) cls.push("clip--tight");
  if (c.faint) cls.push("clip--faint");
  if (c.auto) {
    return `<div class="${cls.join(" ")} clip--auto" style="${place}"><div class="clip-head">${lineSvg(c.auto, len)}${iconSvg}${label}</div></div>`;
  }
  if (c.flat) {
    return `<div class="${cls.join(" ")} clip--flat" style="${place}"><div class="clip-head">${waveSvg(c.flat, len, c)}${iconSvg}${label}</div></div>`;
  }
  const body = c.notes ? notesSvg(c.notes, len) : waveSvg(c.wave, len, c);
  return `<div class="${cls.join(" ")}" style="${place}"><div class="clip-head">${iconSvg}${label}</div><div class="clip-body">${body}</div></div>`;
}

document.getElementById("tracks").innerHTML = tracks.map(([name, color, size, flags], row) => {
  const parent = flags.includes("parent");
  const head = [
    name ? `<span class="name">${name}</span>` : "",
    size === "tall" ? `<button class="more" aria-label="${name} options"><i></i><i></i><i></i></button>` : "",
    parent ? `<button class="fold" aria-label="Collapse ${name}"></button>` : "",
    `<input class="led" type="checkbox" checked aria-label="Enable ${name || "track"}">`
  ].join("");
  const mods = flags.split(" ").map(f => `head--${f}`).join(" ");
  return `<div class="track ${size ? "track--" + size : ""}"><div class="head ${mods} c-${color}">${head}</div><div class="strip"></div><div class="lane">${lanes[row].map(clipHtml).join("")}</div></div>`;
}).join("");

/* ---- picker ---- */
document.getElementById("picker").innerHTML = [
  ["bass main", "bass", "bass"], ["synt", "synt", "synt"], ["piano", "piano", "piano"],
  ["CELLO", "cello", "cello"], ["bass intro", "intro", "intro"]
].map(([label, kind, notes]) => `<button class="clip pattern k-${kind}"><span class="clip-head"><svg><use href="#c-pattern"/></svg><span>${label}</span></span><span class="clip-body">${notesSvg(notes, patterns[notes].bars)}</span>${kind === "intro" ? '<svg class="playhead" viewBox="0 0 15 24"><path d="M1 1Q5 1 14 12Q5 23 1 23Q3 12 1 1Z"/></svg>' : ""}</button>`).join("");

/* ---- ruler ---- */
let marks = "";
for (let b = 1; b < BARS; b += 4) marks += `<span>${b}</span>`;
document.getElementById("ruler").innerHTML = marks + '<svg class="marker" viewBox="0 0 16 18"><path d="M0 1H15V6L1 17H0Z"/></svg>';

/* ---- overview ---- */
const mini = {
  drum: "#c9bb78", synth: "#b37564", shaker: "#92ad5c", shaker2: "#6aa6b2", fx: "#7d6c80", cello: "#7fc2a0",
  piano: "#c2b573", df: "#95569f", hh: "#6d6a7c", bass: "#b884cc", vox: "#d45d7c", vox2: "#6cc0c8", fx2: "#7d6a74",
  rev: "#76c79a", synt: "#a2d592", muted: "#7a9a72", verb: "#6670a0", vol: "#6d9794", red: "#d06060", drop: "#5d5db5",
  lime: "#a5c86a", main: "#5d62b8", sava: "#75697c", fine: "#6b8f8c", loops: "#746a80", ticks: "#9aaab0", chops: "#5d5db5"
};
let map = "";
lanes.forEach((clips, row) => clips.forEach(c => {
  map += `<rect x="${c.start}" y="${(1.5 + row * 1.1).toFixed(1)}" width="${c.end - c.start}" height="1.1" fill="${mini[c.kind]}"/>`;
}));
for (const [a, b] of [[8, 23], [56, 79]]) map += `<rect x="${a}" y="35" width="${b - a}" height="1" fill="#8fc4cf"/>`;
document.getElementById("minimap").innerHTML = map;
```
